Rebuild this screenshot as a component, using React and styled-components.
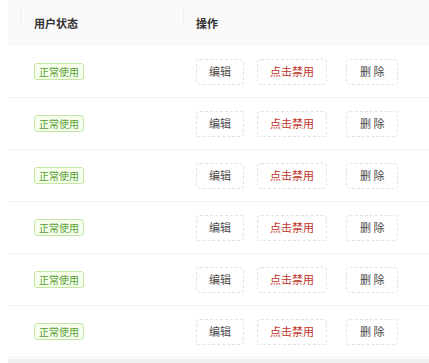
import React from "react";
import styled, { createGlobalStyle } from "styled-components";

const Global = createGlobalStyle`
  html, body { margin: 0; padding: 0; background: #fff; overflow: hidden; }
  body { font-family: "Noto Sans CJK SC", "Noto Sans", sans-serif; }
`;

const Wrap = styled.div`
  box-sizing: border-box;
  padding-left: 8px;
  width: 100%;
`;

const Row = styled.div`
  display: grid;
  grid-template-columns: 12px 163px 1fr;
  align-items: center;
  height: ${(p) => (p.$head ? "45px" : "51px")};
  background: ${(p) => (p.$head ? "#fafafa" : "#fff")};
  border-bottom: 1px solid ${(p) => (p.$head ? "#fafafa" : "#f4f4f4")};
`;

const HeadCell = styled.div`
  position: relative;
  padding-left: ${(p) => p.$pad || 14}px;
  font-size: 11px;
  font-weight: 700;
  color: #333;
  &::before {
    content: "";
    position: absolute;
    left: 0;
    top: -9px;
    height: 20px;
    width: 1px;
    background: #ededed;
  }
`;

const Cell = styled.div`
  display: flex;
  align-items: center;
  padding-left: ${(p) => p.$pad || 14}px;
`;

const Tag = styled.span`
  display: inline-flex;
  align-items: center;
  justify-content: center;
  box-sizing: border-box;
  height: 17px;
  padding: 0 4px;
  font-size: 10px;
  color: #5a9e32;
  background: #f6ffed;
  border: 1px solid #c3e8a4;
  border-radius: 3px;
  line-height: 1;
`;

const Btn = styled.button`
  box-sizing: border-box;
  height: 26px;
  padding: 0 ${(p) => p.$px || 12}px;
  margin-left: ${(p) => p.$ml || 0}px;
  font-family: "Noto Sans CJK SC", "Noto Sans", sans-serif;
  font-size: 11px;
  color: ${(p) => (p.$danger ? "#c0352b" : "#4a4a4a")};
  background: #fff;
  border: 1px dashed #e2e2e2;
  border-radius: 4px;
  white-space: pre;
  line-height: 1;
`;

const Track = styled.div`
  height: 6px;
  margin-top: 1px;
  background: #efefef;
`;

export default function App() {
  const rows = [0, 1, 2, 3, 4, 5];
  return (
    <Wrap>
      <Global />
      <Row $head>
        <div />
        <HeadCell>用户状态</HeadCell>
        <HeadCell $pad={13}>操作</HeadCell>
      </Row>
      {rows.map((i) => (
        <Row key={i}>
          <div />
          <Cell>
            <Tag>正常使用</Tag>
          </Cell>
          <Cell $pad={13}>
            <Btn>编辑</Btn>
            <Btn $danger $ml={13}>点击禁用</Btn>
            <Btn $ml={19} $px={13}>删 除</Btn>
          </Cell>
        </Row>
      ))}
      <Track />
    </Wrap>
  );
}
